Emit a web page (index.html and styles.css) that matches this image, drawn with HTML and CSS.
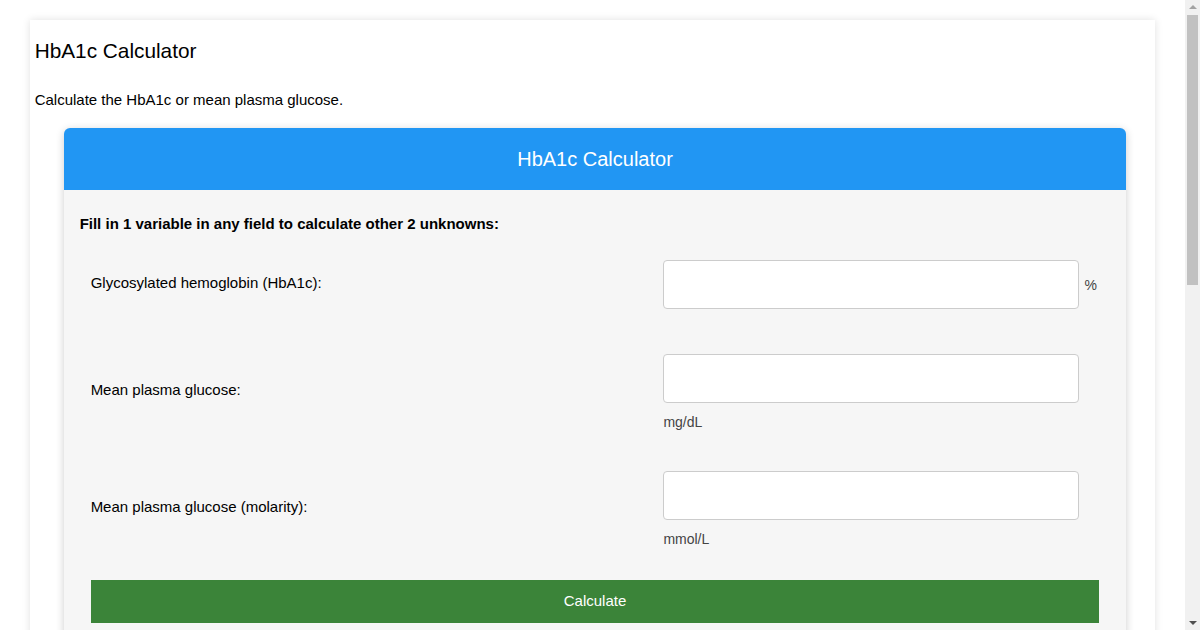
FILE: index.html
```html
<!DOCTYPE html>
<html lang="en">
<head>
  <meta charset="UTF-8" />
  <meta name="viewport" content="width=device-width, initial-scale=1.0" />
  <title>HbA1c Calculator</title>
  <link rel="stylesheet" href="styles.css">
</head>
<body>

  <div class="page">
    <div class="page-card">
      <h1>HbA1c Calculator</h1>
      <p class="intro">Calculate the HbA1c or mean plasma glucose.</p>

      <div class="calculator">
        <div class="calc-header">HbA1c Calculator</div>
        <div class="calc-body">
          <p class="instructions">Fill in 1 variable in any field to calculate other 2 unknowns:</p>

          <div class="calc-row single">
            <label for="hba1c">Glycosylated hemoglobin (HbA1c):</label>
            <div class="field inline">
              <input type="text" id="hba1c" />
              <span class="unit">%</span>
            </div>
          </div>

          <div class="calc-row">
            <label for="mpg">Mean plasma glucose:</label>
            <div class="field">
              <input type="text" id="mpg" />
              <div class="unit">mg/dL</div>
            </div>
          </div>

          <div class="calc-row">
            <label for="mpgm">Mean plasma glucose (molarity):</label>
            <div class="field">
              <input type="text" id="mpgm" />
              <div class="unit">mmol/L</div>
            </div>
          </div>

          <button type="button" class="btn-calc">Calculate</button>

          <div class="result"></div>
        </div>
      </div>
    </div>
  </div>

  <!-- page scrollbar -->
  <div class="scrollbar">
    <span class="arrow up"></span>
    <span class="thumb"></span>
    <span class="arrow down"></span>
  </div>

</body>
</html>
```

FILE: styles.css
```css
* {
  box-sizing: border-box;
}

body {
  margin: 0;
  background: #fff;
  font-family: 'Liberation Sans', Arial, sans-serif;
  color: #000;
}

.page {
  margin-right: 15px;
  padding: 20px 0;
}

.page-card {
  width: 95%;
  margin: 0 auto;
  padding: 5px 5px 40px;
  background: #fff;
  box-shadow: 0 0 8px rgba(0, 0, 0, 0.12);
}

.page-card h1 {
  font-size: 20.8px;
  font-weight: normal;
  line-height: 24px;
  margin: 14px 0 0;
}

.intro {
  font-size: 15px;
  line-height: 17px;
  margin: 28px 0 20px;
}

.calculator {
  margin: 0 24px 0 29px;
  border-radius: 6px;
  background: #f6f6f6;
  box-shadow: 0 2px 8px rgba(0, 0, 0, 0.2);
}

.calc-header {
  background: #2196f3;
  color: #fff;
  text-align: center;
  font-size: 20px;
  line-height: 22px;
  padding: 20px;
  border-radius: 6px 6px 0 0;
}

.calc-body {
  padding: 25px 27px 60px;
}

.instructions {
  margin: 0 -11px 8px;
  font-size: 15px;
  font-weight: bold;
  line-height: 17px;
}

.calc-row {
  display: grid;
  grid-template-columns: 1fr 436px;
  align-items: center;
  padding: 20px 0;
}

.calc-row.single {
  padding-bottom: 25px;
}

.calc-row label {
  font-size: 15px;
  line-height: 17px;
  padding-bottom: 7px;
}

.calc-row.single label {
  padding-bottom: 5px;
}

.field input {
  display: block;
  width: 416px;
  height: 49px;
  border: 1px solid #ccc;
  border-radius: 4px;
  background: #fff;
  font-size: 15px;
  padding: 0 10px;
}

.field.inline {
  display: flex;
  align-items: center;
  gap: 5px;
}

.unit {
  font-size: 14px;
  line-height: 18px;
  color: #444;
}

div.unit {
  margin-top: 10px;
}

.btn-calc {
  display: block;
  width: 100%;
  height: 43px;
  margin-top: 12px;
  border: none;
  background: #3b8439;
  color: #fff;
  font-family: 'Liberation Sans', Arial, sans-serif;
  font-size: 15px;
  line-height: 17px;
  padding: 0 0 2px;
  cursor: pointer;
}

.result {
  height: 120px;
}

/* fake browser scrollbar */
.scrollbar {
  position: fixed;
  top: 0;
  right: 0;
  width: 15px;
  height: 100vh;
  background: #f1f1f1;
  display: flex;
  flex-direction: column;
  align-items: center;
}

.scrollbar .arrow {
  width: 0;
  height: 0;
  border-left: 4px solid transparent;
  border-right: 4px solid transparent;
}

.scrollbar .arrow.up {
  margin-top: 5px;
  border-bottom: 4px solid #a3a3a3;
}

.scrollbar .arrow.down {
  margin-top: auto;
  margin-bottom: 5px;
  border-top: 4px solid #505050;
}

.scrollbar .thumb {
  width: 11px;
  height: 270px;
  margin-top: 6px;
  background: #c1c1c1;
}
```
